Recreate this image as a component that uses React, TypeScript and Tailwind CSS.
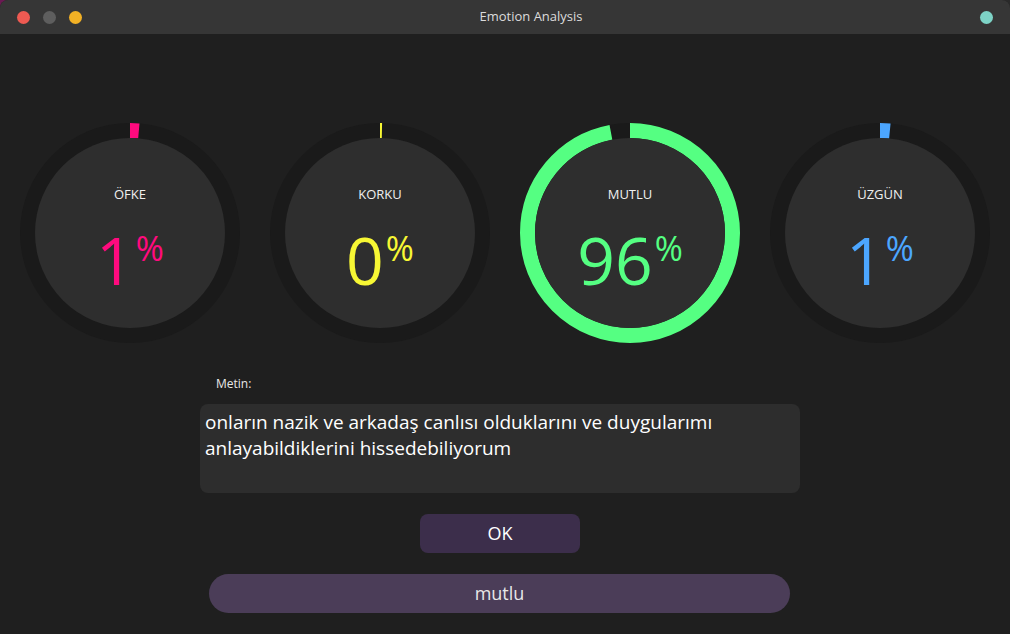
import React from "react";

const C = 2 * Math.PI * 102.5;

const gauges = [
  { label: "ÖFKE", value: "1", arc: 9, color: "#ff0a7e", text: "text-[#ff0a7e]" },
  { label: "KORKU", value: "0", arc: 2, color: "#f7f734", text: "text-[#f7f734]" },
  { label: "MUTLU", value: "96", arc: C - 20, color: "#55ff82", text: "text-[#55ff82]" },
  { label: "ÜZGÜN", value: "1", arc: 10, color: "#4ca6ff", text: "text-[#4ca6ff]" },
];

function Gauge({ label, value, arc, color, text }: (typeof gauges)[number]) {
  return (
    <div className="relative w-[220px] h-[220px] rounded-full bg-[#1a1a1a] flex items-center justify-center">
      <svg className="absolute inset-0" width="220" height="220" viewBox="0 0 220 220">
        <circle
          cx="110"
          cy="110"
          r="102.5"
          fill="none"
          stroke={color}
          strokeWidth="15"
          strokeDasharray={`${arc} ${C}`}
          transform="rotate(-90 110 110)"
        />
      </svg>
      <div className="relative w-[190px] h-[190px] rounded-full bg-[#2e2e2e] flex flex-col items-center pt-[47px]">
        <span className="text-[13px] leading-[18px] text-[#f0f0f0]">{label}</span>
        <div className={`flex items-start mt-[23px] ${text}`}>
          <span className="text-[66px] leading-none">{value}</span>
          <span className="text-[34px] leading-none mt-[5px] ml-[2px]">%</span>
        </div>
      </div>
    </div>
  );
}

export default function App() {
  return (
    <div className="w-[1010px] h-[634px] bg-gradient-to-r from-[#6a1a52] to-[#2a2a2a] font-['Open_Sans','Noto_Sans',sans-serif] overflow-hidden">
      <div className="w-full h-full rounded-t-[8px] overflow-hidden bg-[#1f1f1f] flex flex-col">
        {/* title bar */}
        <div className="h-[34px] bg-[#363636] flex items-center pl-[17px] pr-[17px] shrink-0">
          <div className="flex gap-[13px]">
            <span className="w-[13px] h-[13px] rounded-full bg-[#ee5a52]" />
            <span className="w-[13px] h-[13px] rounded-full bg-[#5e5e5e]" />
            <span className="w-[13px] h-[13px] rounded-full bg-[#f2b125]" />
          </div>
          <div className="flex-1 text-center text-[13px] text-[#dcdcdc]">Emotion Analysis</div>
          <span className="w-[13px] h-[13px] rounded-full bg-[#7dd3c6]" />
        </div>

        {/* gauges */}
        <div className="flex gap-[30px] pl-[20px] pt-[89px]">
          {gauges.map((g) => (
            <Gauge key={g.label} {...g} />
          ))}
        </div>

        {/* text input */}
        <div className="w-[600px] ml-[200px] mt-[32px]">
          <div className="pl-[16px] text-[12px] leading-[18px] text-[#e8e8e8]">Metin:</div>
          <div className="mt-[11px] h-[89px] rounded-[8px] bg-[#2d2d2d] px-[5px] pt-[5px] text-[19px] leading-[26px] text-white">
            onların nazik ve arkadaş canlısı olduklarını ve duygularımı anlayabildiklerini hissedebiliyorum
          </div>
        </div>

        <button className="mt-[21px] ml-[420px] w-[160px] h-[39px] rounded-[8px] bg-[#3c2e4b] text-[18px] text-white">
          OK
        </button>

        <div className="mt-[21px] ml-[209px] w-[581px] h-[39px] rounded-full bg-[#4b3d58] flex items-center justify-center text-[18px] text-[#e8e8e8]">
          mutlu
        </div>
      </div>
    </div>
  );
}
